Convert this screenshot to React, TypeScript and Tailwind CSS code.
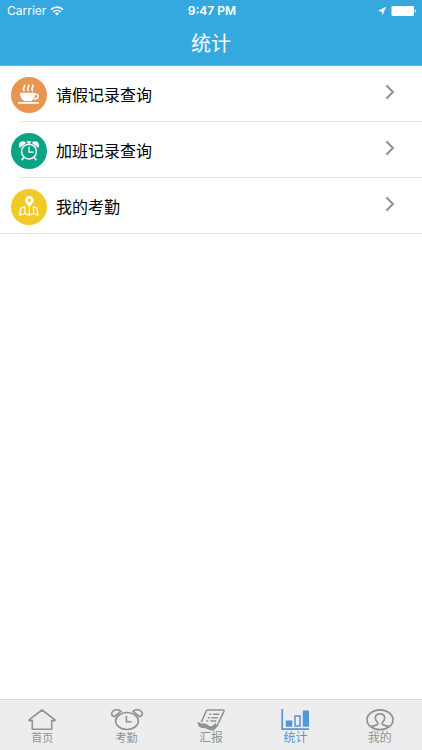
import type { ReactNode } from 'react';

interface RecordItem {
  label: string;
  color: string;
  icon: ReactNode;
}

interface TabItem {
  label: string;
  labelSize: string;
  icon: ReactNode;
  active?: boolean;
}

function WifiIcon() {
  return (
    <svg className="w-3.5 h-2.5" viewBox="0 0 14 10" fill="none" stroke="currentColor" strokeWidth="1.6" aria-hidden="true">
      <path d="M1 3.6a8.6 8.6 0 0 1 12 0" />
      <path d="M3.3 6a5.4 5.4 0 0 1 7.4 0" />
      <path d="M7 9.6L4.9 7.5a3 3 0 0 1 4.2 0z" fill="currentColor" stroke="none" />
    </svg>
  );
}

function LocationIcon() {
  return (
    <svg className="w-2.5 h-2.5" viewBox="0 0 10 10" fill="currentColor" aria-hidden="true">
      <path d="M9.2 0.8L5.4 9.2 4.6 5.5.6 4.9z" />
    </svg>
  );
}

function BatteryIcon() {
  return (
    <svg className="w-[26px] h-2.5" viewBox="0 0 26 10" fill="currentColor" aria-hidden="true">
      <rect x="0.5" width="22.5" height="10" rx="1.2" />
      <path d="M23.8 3.2c1.6.5 1.6 3.1 0 3.6z" />
    </svg>
  );
}

function CupIcon() {
  return (
    <svg className="w-9 h-9" viewBox="0 0 36 36" fill="none" stroke="white" aria-hidden="true">
      <path
        d="M12.8 7.6c3 1.8-2.6 3.4.6 6.6M17 7.6c3 1.8-2.6 3.4.6 6.6M21.2 7.6c3 1.8-2.6 3.4.6 6.6"
        strokeWidth="1.5"
      />
      <path d="M9 15.7h15.4c0 4.4-1.6 6.7-4.2 8.3h-7c-2.6-1.6-4.2-3.9-4.2-8.3z" fill="white" stroke="none" />
      <path d="M23.8 17.4c4.8-1 5 4.6-1.2 4.6" strokeWidth="1.5" />
      <path d="M7 25.9h21" strokeWidth="1.7" />
    </svg>
  );
}

function AlarmIcon() {
  return (
    <svg className="w-9 h-9" viewBox="0 0 36 36" fill="none" stroke="white" aria-hidden="true">
      <circle cx="18" cy="18.6" r="7.4" strokeWidth="1.4" />
      <path d="M8.7 15C6.2 9.6 11.2 6.4 15.3 9.7zM27.3 15c2.5-5.4-2.5-8.6-6.6-5.3z" fill="white" stroke="none" />
      <path d="M18 11.3V9M16 8.9h4M12.9 24.2l-2.2 3M23.1 24.2l2.2 3" strokeWidth="1.6" />
      <path d="M18 13.5v5.7h4.8" strokeWidth="1.2" />
    </svg>
  );
}

function MapIcon() {
  return (
    <svg className="w-9 h-9" viewBox="0 0 36 36" fill="none" stroke="white" aria-hidden="true">
      <path
        d="M18.4 7a4.2 4.2 0 0 1 4.2 4.3c0 2.9-3 4-4.2 7.9-1.2-3.9-4.2-5-4.2-7.9A4.2 4.2 0 0 1 18.4 7zm0 2.6a1.7 1.7 0 1 0 0 3.4 1.7 1.7 0 0 0 0-3.4z"
        fill="white"
        fillRule="evenodd"
        stroke="none"
      />
      <path
        d="M14 17.5l-4.2 1.6-1 7.2 5.2-1.8 4.4 1.8 4.4-1.8 4.2 1.8-1.2-7.2-3.4-1.6M14 17.5v7M18.4 19.3v7M22.4 17.5l.4 7"
        strokeWidth="1.2"
        strokeLinejoin="round"
      />
    </svg>
  );
}

function ChevronIcon() {
  return (
    <svg className="w-2.5 h-4 mb-1.5" viewBox="0 0 10 16" fill="none" stroke="#8e8e92" strokeWidth="1.9" aria-hidden="true">
      <path d="M1.4 1.5L8 8l-6.6 6.5" />
    </svg>
  );
}

function HomeTabIcon() {
  return (
    <svg className="w-7 h-[22px]" viewBox="0 0 28 22" fill="none" stroke="currentColor" strokeWidth="1.6" strokeLinejoin="round" aria-hidden="true">
      <path d="M1 10.8L14 1l13 9.8v.8h-3.3v8.6H4.3v-8.6H1z" />
    </svg>
  );
}

function ClockTabIcon() {
  return (
    <svg className="w-[34px] h-[22px]" viewBox="0 0 34 22" fill="none" stroke="currentColor" strokeWidth="1.6" strokeLinejoin="round" aria-hidden="true">
      <ellipse cx="17" cy="12" rx="11.4" ry="8.5" />
      <path d="M4.2 7.6C-2 5.5 4-2.3 11 2.3zM29.8 7.6C36 5.5 30-2.3 23 2.3z" />
      <path d="M16.4 7v5.8h5.1" />
    </svg>
  );
}

function ReportTabIcon() {
  return (
    <svg className="w-7 h-[22px]" viewBox="0 0 28 22" fill="none" stroke="currentColor" strokeLinejoin="round" aria-hidden="true">
      <path d="M4.3 13L9.3 2c.4-.8.9-1 1.6-1h15c1 0 1.4.6 1 1.5L19.5 18" strokeWidth="1.6" />
      <path
        d="M.6 12.9h1.2c1 1.7 3.4 1.7 6 1.7 2.400.1 3.200 2.400 5.600 2.600 2.200.1 3.300-1.300 4.800-3.200l2.200 2.900c-1.200 2.600-2.900 4.500-5.700 4.500-3.600 0-4.500-2.200-8.100-2.300-4-.1-6-1.800-6-6.200z"
        fill="currentColor"
        stroke="none"
      />
      <path d="M12.300 5.300h2M10.800 8.700h2M9.300 12h2M15.800 5.300h6.400M14.300 8.700h6.400M13.400 12h5.800" strokeWidth="1.5" />
    </svg>
  );
}

function StatsTabIcon() {
  return (
    <svg className="w-7 h-[22px]" viewBox="0 0 28 22" fill="none" stroke="currentColor" aria-hidden="true">
      <path d="M1.2 0v20.2H28" strokeWidth="1.7" />
      <path d="M4.8 11.5h6.400v6.200H4.800zM21.800 1.500H28v16.200h-6.200z" fill="currentColor" stroke="none" />
      <path d="M14 7h5v10h-5z" strokeWidth="1.5" />
    </svg>
  );
}

function ProfileTabIcon() {
  return (
    <svg className="w-7 h-[22px]" viewBox="0 0 28 22" fill="none" stroke="currentColor" strokeWidth="1.7" aria-hidden="true">
      <ellipse cx="14" cy="10.7" rx="13" ry="9.9" />
      <path d="M5.500 17.600c2-1.300 6.400-.8 6.400-3.200 0-1.300-2.600-2.500-2.600-5.300 0-2.700 1.900-4.300 4.700-4.300s4.700 1.600 4.700 4.300c0 2.800-2.600 4-2.600 5.300 0 2.400 4.400 1.900 6.400 3.200" />
    </svg>
  );
}

const RECORDS: RecordItem[] = [
  { label: '请假记录查询', color: 'bg-[#e8954f]', icon: <CupIcon /> },
  { label: '加班记录查询', color: 'bg-[#0aa386]', icon: <AlarmIcon /> },
  { label: '我的考勤', color: 'bg-[#f0cb26]', icon: <MapIcon /> },
];

const TABS: TabItem[] = [
  { label: '首页', labelSize: 'text-[11px]', icon: <HomeTabIcon /> },
  { label: '考勤', labelSize: 'text-[11px]', icon: <ClockTabIcon /> },
  { label: '汇报', labelSize: 'text-xs', icon: <ReportTabIcon /> },
  { label: '统计', labelSize: 'text-xs', icon: <StatsTabIcon />, active: true },
  { label: '我的', labelSize: 'text-xs', icon: <ProfileTabIcon /> },
];

export default function App() {
  return (
    <div className="min-h-screen flex flex-col bg-white font-['Inter','Noto_Sans_CJK_SC',sans-serif]">
      {/* Header */}
      <header className="bg-[#35a8e0] text-white border-b border-[#78b3d0]">
        <div className="grid grid-cols-3 items-center h-[21px] pl-[7px] pr-[5px] text-xs">
          <div className="flex items-center gap-1">
            <span>Carrier</span>
            <WifiIcon />
          </div>
          <span className="text-center font-semibold">9:47 PM</span>
          <div className="flex items-center justify-end gap-1">
            <LocationIcon />
            <BatteryIcon />
          </div>
        </div>
        <h1 className="h-11 pt-px text-center text-xl leading-[44px]">统计</h1>
      </header>

      {/* Record list */}
      <main className="flex-1">
        <ul className="border-b border-[#e2e2e4]">
          {RECORDS.map((record, index) => (
            <li key={record.label}>
              {index > 0 && <div className="ml-[21px] h-px bg-[#e2e2e4]" />}
              <button className="w-full h-[55px] flex items-center pt-[3px] pl-[11px] pr-[27px] text-left">
                <span className={`w-9 h-9 rounded-full shrink-0 ${record.color}`}>{record.icon}</span>
                <span className="flex-1 ml-[9px] text-base text-black">{record.label}</span>
                <ChevronIcon />
              </button>
            </li>
          ))}
        </ul>
      </main>

      {/* Tab bar */}
      <nav className="sticky bottom-0 grid grid-cols-5 h-[51px] bg-[#ededed] border-t border-[#d8d8d8]">
        {TABS.map((tab) => (
          <button
            key={tab.label}
            aria-current={tab.active ? 'page' : undefined}
            className={`flex flex-col items-center pt-[9px] ${tab.active ? 'text-[#5695d6]' : 'text-[#929292]'}`}
          >
            {tab.icon}
            <span className={`leading-[14px] ${tab.labelSize}`}>{tab.label}</span>
          </button>
        ))}
      </nav>
    </div>
  );
}
